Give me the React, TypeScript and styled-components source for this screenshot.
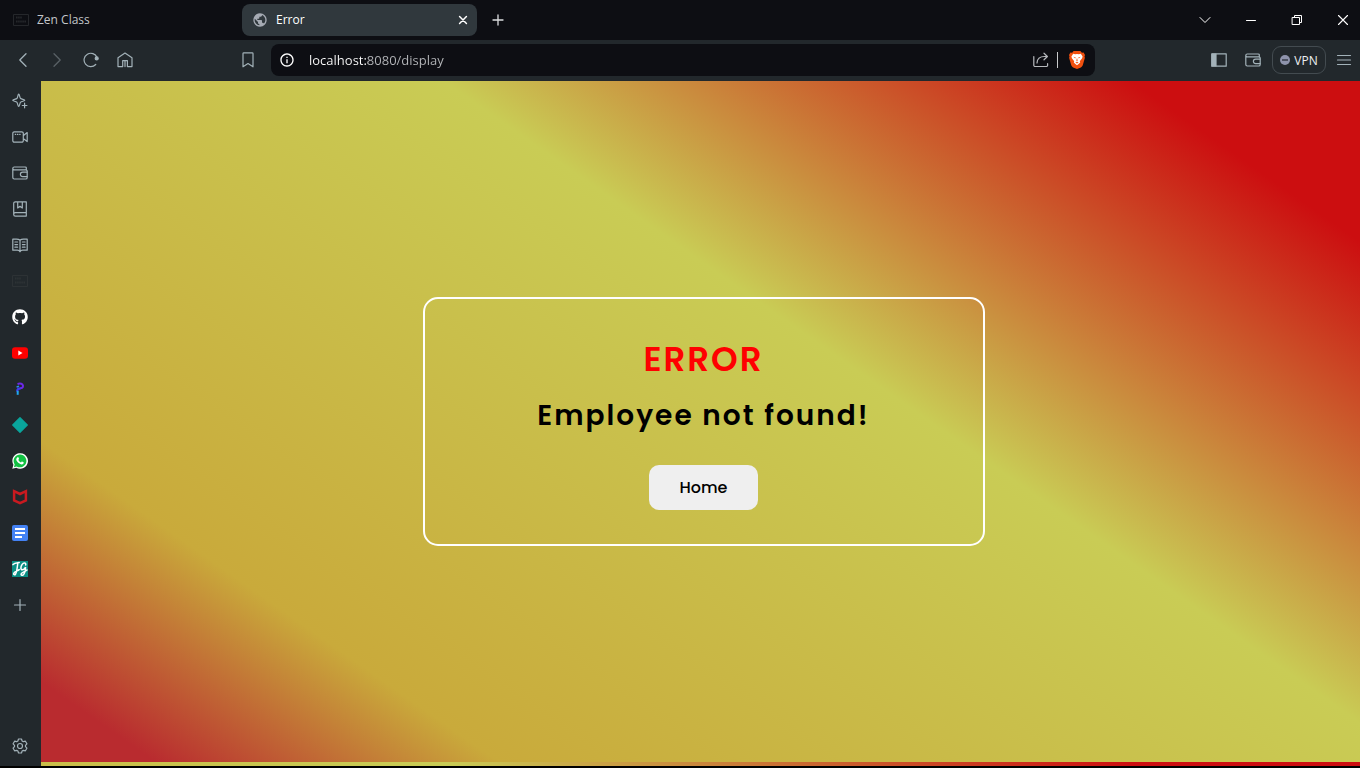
import React from 'react';
import styled, { createGlobalStyle } from 'styled-components';
import { FaGithub } from 'react-icons/fa';
import { MdPublic, MdInfoOutline } from 'react-icons/md';

const GlobalStyle = createGlobalStyle`
  *, *::before, *::after { box-sizing: border-box; }
  body { margin: 0; background: #000; }
  button, input { font: inherit; color: inherit; }
`;

const Browser = styled.div`
  display: flex;
  flex-direction: column;
  min-height: 100vh;
  padding-bottom: 2px;
  font-family: 'Open Sans', 'Noto Sans', sans-serif;
  font-size: 12px;
  color: #e4e7ea;
`;

const TabBar = styled.header`
  display: flex;
  align-items: center;
  height: 40px;
  background: #0d0e13;
`;

const Tab = styled.div<{ $active?: boolean }>`
  display: flex;
  align-items: center;
  gap: 8px;
  flex: 0 1 ${p => (p.$active ? '235px' : '242px')};
  height: 32px;
  padding: 0 4px 0 ${p => (p.$active ? '10px' : '13px')};
  border-radius: 8px;
  background: ${p => (p.$active ? '#30383d' : 'transparent')};
  color: ${p => (p.$active ? '#ffffff' : '#c3c6ca')};
`;

const TabTitle = styled.span`
  flex: 1;
  line-height: 16px;
`;

const IconButton = styled.button<{ $w?: number; $h?: number; $color?: string }>`
  display: flex;
  align-items: center;
  justify-content: center;
  flex: none;
  width: ${p => p.$w ?? 34}px;
  height: ${p => p.$h ?? 32}px;
  padding: 0;
  border: 0;
  background: none;
  color: ${p => p.$color ?? '#a3b2b9'};
`;

const WindowControls = styled.div`
  display: flex;
  margin-left: auto;
  margin-right: -6px;
`;

const Toolbar = styled.nav`
  display: flex;
  align-items: center;
  height: 41px;
  padding-bottom: 1px;
  background: #22282c;
`;

const ToolGroup = styled.div<{ $end?: boolean }>`
  display: flex;
  align-items: center;
  flex: 1;
  justify-content: ${p => (p.$end ? 'flex-end' : 'space-between')};
`;

const NavButtons = styled.div`
  display: flex;
  margin-left: 6px;
`;

const AddressBar = styled.form`
  display: flex;
  align-items: center;
  flex: 0 1 824px;
  height: 32px;
  margin-left: 6px;
  padding: 0 0 0 8px;
  border-radius: 8px;
  background: #0d0e13;
`;

const AddressInput = styled.input`
  flex: 1;
  min-width: 0;
  height: 24px;
  margin-left: 14px;
  padding: 0;
  border: 0;
  outline: 0;
  font-size: 13px;
  background: linear-gradient(90deg, #ffffff 59px, #b5b7ba 59px);
  background-clip: text;
  -webkit-text-fill-color: transparent;
`;

const Divider = styled.span`
  width: 1px;
  height: 16px;
  background: #c8cacc;
`;

const VpnButton = styled.button`
  display: flex;
  align-items: center;
  justify-content: center;
  gap: 4px;
  width: 54px;
  height: 28px;
  margin: 0 1px 0 2px;
  padding: 0;
  border: 1px solid #434b50;
  border-radius: 9px;
  background: none;
  color: #eef0f2;
`;

const Body = styled.div`
  display: flex;
  flex: 1;
`;

const Sidebar = styled.aside`
  display: flex;
  flex-direction: column;
  align-items: center;
  flex: none;
  width: 41px;
  padding: 2px 1px 2px 0;
  background: #22282c;
`;

const SettingsSlot = styled.div`
  margin-top: auto;
`;

const Page = styled.main`
  display: flex;
  align-items: center;
  justify-content: center;
  flex: 1;
  padding: 0 0 4px 6px;
  font-family: Poppins, Inter, sans-serif;
  background-image: linear-gradient(35deg, #b92b2f 5%, #c9aa3b 20%, #c9cc55 60%, #cc0e10 90%);
  background-size: 100% calc(100% - 4px);
`;

const Card = styled.section`
  display: flex;
  flex-direction: column;
  align-items: center;
  width: 562px;
  padding: 35px 34px 34px;
  border: 2px solid #ffffff;
  border-radius: 15px;
  text-align: center;
`;

const Title = styled.h1`
  margin: 0 0 10px;
  font-size: 34px;
  font-weight: 600;
  line-height: 51px;
  letter-spacing: 2px;
  color: #ff0000;
`;

const Message = styled.h2`
  margin: 0 0 28px;
  font-size: 28px;
  font-weight: 600;
  line-height: 42px;
  letter-spacing: 2px;
  color: #000000;
`;

const HomeButton = styled.button`
  height: 45px;
  padding: 0 31px;
  border: 0;
  border-radius: 10px;
  background: #efefef;
  color: #000000;
  font-size: 16px;
  font-weight: 500;
`;

type IconProps = { children: React.ReactNode; size?: number; sw?: number };
const Line = ({ children, size = 16, sw = 1.2 }: IconProps) => (
  <svg width={size} height={size} viewBox="0 0 16 16" fill="none" stroke="currentColor"
    strokeWidth={sw} strokeLinecap="round" strokeLinejoin="round" aria-hidden="true">
    {children}
  </svg>
);

const ZenIcon = ({ color }: { color: string }) => (
  <svg width="16" height="16" viewBox="0 0 16 16" fill="none" stroke={color} aria-hidden="true">
    <path d="M.5 2.5h15v11H.5z" />
    <path d="M3 5.5h6M3 9.5h10" strokeWidth="2" strokeDasharray="1.6 .5" />
  </svg>
);

const Wallet = () => (
  <Line>
    <path d="M14.300 5V3a1 1 0 0 0-1-1H2.200A1.400 1.400 0 0 0 .8 3.400v9.200A1.400 1.400 0 0 0 2.200 14h11.400a1.600 1.600 0 0 0 1.600-1.600V6.200A1.400 1.400 0 0 0 13.800 4.800H2.200A1.400 1.400 0 0 1 .8 3.400" />
    <path d="M15 7.200h-4.400a2.200 2.200 0 0 0 0 4.400H15" />
  </Line>
);

const Sparkle = () => (
  <Line>
    <path d="M6.700 1.200c.9 0 .9 3.400 1.900 4.300s4.200.9 4.200 1.800-3.200.9-4.200 1.900-1 4.200-1.900 4.200-.9-3.200-1.900-4.200S.7 8.200.7 7.300s3.200-.8 4.200-1.800.9-4.300 1.800-4.300z" />
    <path d="M12.600 10.200v4.600M10.300 12.500h4.600" />
  </Line>
);

const Camera = () => (
  <Line>
    <path d="M2.300 2.800h7.500a1.500 1.500 0 0 1 1.500 1.500v7.400a1.500 1.500 0 0 1-1.500 1.500H2.300a1.500 1.500 0 0 1-1.500-1.500V4.300a1.500 1.500 0 0 1 1.500-1.500zM11.500 6.400l3.700-2.800v9l-3.700-2.800" />
    <path d="M3.300 5.400h.4M5.500 5.400h.4M7.700 5.400h.4" />
  </Line>
);

const Album = () => (
  <Line>
    <path d="M14.300 11.700V.8H3.300a1.600 1.600 0 0 0-1.600 1.600v11a1.700 1.700 0 0 0 1.700 1.700h10.900M14.300 11.700H3.300a1.600 1.600 0 0 0-1.600 1.600M14.300 11.700v3.400M5.700 1v6l2.300-1.700L10.300 7V1" />
  </Line>
);

const Book = () => (
  <Line>
    <path d="M8 3.200C7 2.400 6 2.200 4.500 2.200H.8v11h4.500c1.200 0 2 .4 2.700 1.600.7-1.200 1.500-1.600 2.700-1.600h4.500v-11h-3.700C10 2.200 9 2.400 8 3.200zM8 3.200v11" />
    <path d="M2.900 5h2.700M2.900 7.600h2.700M2.900 10.200h2.700M10.400 5h2.700M10.400 7.600h2.700M10.400 10.200h2.700" />
  </Line>
);

const YouTube = () => (
  <svg width="16" height="16" viewBox="0 0 16 16" aria-hidden="true">
    <rect y="2.300" width="16" height="11.500" rx="3" fill="#f00" />
    <path d="M6.300 5.600v4.900L10.500 8z" fill="#fff" />
  </svg>
);

const Ribbon = () => (
  <svg width="16" height="16" viewBox="0 0 16 16" fill="none" aria-hidden="true">
    <path d="M5.500 3c3-1 5.200-.2 5.500 1.600S9.800 7.400 8 7.200" stroke="#6d28e8" strokeWidth="2" />
    <path d="M4.600 6l2.400-.8" stroke="#2a90e8" strokeWidth="1.600" />
    <path d="M8.600 7.400c-2.400 0-3.400.8-3.400 3" stroke="#4338f5" strokeWidth="2.200" />
    <path d="M5.700 9.800v4" stroke="#20a8f0" strokeWidth="2" />
  </svg>
);

const Diamond = () => (
  <svg width="16" height="16" viewBox="0 0 16 16" aria-hidden="true">
    <path d="M8 .8L15.200 8 8 15.200.8 8z" fill="#0aa59c" stroke="#0aa59c" strokeWidth="1.400" strokeLinejoin="round" />
  </svg>
);

const WhatsApp = () => (
  <svg width="16" height="16" viewBox="0 0 16 16" aria-hidden="true">
    <path d="M.3 15.800l1.100-4A7.800 7.800 0 1 1 4.300 14.700z" fill="#fff" />
    <path d="M1.900 14.200l.8-2.700A6.400 6.400 0 1 1 4.700 13.400z" fill="#12c143" />
    <path d="M5.600 4.200c.5-.2.8 0 .9.400l.5 1.200c.1.400-.5.8-.6 1.100.5 1.200 1.400 2 2.600 2.500.4-.1.7-.9 1.100-.8l1.400.7c.5.300.1 1.400-.4 1.700-.9.600-1.800.5-2.800.1-1.800-.7-3-2-3.800-3.500-.6-1.300-.1-2.700 1.100-3.400z" fill="#fff" />
  </svg>
);

const McShield = () => (
  <svg width="16" height="16" viewBox="0 0 16 16" fill="none" aria-hidden="true">
    <path d="M2.100 2.200L8 5l5.900-2.800v9.200L8 14.200l-5.900-2.800z" stroke="#c91a20" strokeWidth="2.500" />
  </svg>
);

const Docs = () => (
  <svg width="16" height="16" viewBox="0 0 16 16" aria-hidden="true">
    <rect width="16" height="16" rx="2" fill="#4482f4" />
    <path d="M3 4h10M3 8h10M3 12h7" stroke="#fff" strokeWidth="2" />
  </svg>
);

const Monogram = () => (
  <svg width="16" height="16" viewBox="0 0 16 16" fill="none" aria-hidden="true">
    <rect width="16" height="16" fill="#0b8f84" />
    <path d="M1 3.600c1.500-1.800 4-1.700 6.200-2M5.800 2C5.300 6 5 10.500 3.600 13c-.9 1.500-2.500.6-1.700-.9.9-1.500 3.300-2.100 5.300-3.500M13.700 4c.4-2.700-2.200-2.800-3.700-.4-1.300 2-1.700 5.200.3 5.200 1.500 0 2.700-1.500 3.300-2.600-.1 3-.7 6-2.400 7.700-1.200 1-2.700 0-1.700-1.500 1-1.400 3.500-1.500 5.500-3.400" stroke="#fff" strokeWidth="1.500" strokeLinecap="round" />
  </svg>
);

const Gear = () => (
  <Line>
    <path d="M6.500 1h3l.6 2 1.200.7 2.100-.5 1.500 2.600L13.500 7.300v1.400l1.400 1.500-1.500 2.600-2.100-.5-1.200.7-.6 2h-3l-.6-2-1.200-.7-2.100.5-1.500-2.600 1.400-1.500V7.300L1.100 5.800l1.500-2.600 2.100.5L5.900 3z" />
    <circle cx="8" cy="8" r="2.500" />
  </Line>
);

const Lion = () => (
  <svg width="16" height="18" viewBox="0 0 16 18" aria-hidden="true">
    <path d="M4.600 0h6.800l1.500 1.700 1.700-.2L16 4l-.5 1.500.4 1.200-2 7c-.4 1.600-1.300 2.100-2.600 3L8 18l-3.300-1.300c-1.300-.9-2.200-1.400-2.600-3L.1 6.700l.4-1.200L0 4l1.400-2.500 1.700.2z" fill="#f0500f" />
    <path d="M4.200 2.800l1.900.4L8 2.900l1.900.3 1.900-.4 1.800 2.700-.5 1.800-2.300 2.900.4 1.400-1.600 1.300L8 14.300l-1.600-1.400-1.600-1.300.4-1.400-2.300-2.900-.5-1.800z" fill="#fff" />
    <path d="M4.300 5.800l2.500.8-.6 1zM11.700 5.800l-2.500.8.6 1zM7.700 7.500h.6l.3 2.500-.6.600-.6-.6zM6.300 11.500l1.700-.5 1.700.5-1.700 1z" fill="#f0500f" />
  </svg>
);

const shortcuts: [string, React.ReactNode][] = [
  ['Leo AI', <Sparkle />],
  ['Talk', <Camera />],
  ['Wallet', <Wallet />],
  ['Bookmarks', <Album />],
  ['Reading list', <Book />],
  ['Zen Class', <ZenIcon color="#2d3235" />],
  ['GitHub', <FaGithub size={16} color="#fff" />],
  ['YouTube', <YouTube />],
  ['Portfolio', <Ribbon />],
  ['Diamond', <Diamond />],
  ['WhatsApp', <WhatsApp />],
  ['McAfee', <McShield />],
  ['Docs', <Docs />],
  ['Monogram', <Monogram />],
  ['Add to sidebar', <Line><path d="M8 2.500v11M2.500 8h11" /></Line>],
];

export default function App() {
  return (
    <Browser>
      <GlobalStyle />
      <TabBar>
        <Tab>
          <ZenIcon color="#25272b" />
          <TabTitle>Zen Class</TabTitle>
        </Tab>
        <Tab $active>
          <MdPublic size={16} color="#a6abb4" />
          <TabTitle>Error</TabTitle>
          <IconButton $w={20} $h={20} $color="#fff" aria-label="Close tab">
            <Line size={10} sw={2.4}><path d="M2.500 2.500l11 11M13.500 2.500l-11 11" /></Line>
          </IconButton>
        </Tab>
        <IconButton $w={42} $color="#dcdee0" aria-label="New tab">
          <Line sw={1.3}><path d="M8 3v10M3 8h10" /></Line>
        </IconButton>
        <WindowControls>
          <IconButton $w={46} $color="#fff" aria-label="Search tabs">
            <Line sw={1}><path d="M3 5.500l5 5 5-5" /></Line>
          </IconButton>
          <IconButton $w={46} $color="#fff" aria-label="Minimize">
            <Line sw={1}><path d="M3.500 8.500h9" /></Line>
          </IconButton>
          <IconButton $w={46} $color="#fff" aria-label="Restore">
            <Line sw={1}><path d="M3.500 5.500h7v7h-7zM5.500 5.500v-2h7v7h-2" /></Line>
          </IconButton>
          <IconButton $w={46} $color="#fff" aria-label="Close window">
            <Line sw={1.1}><path d="M3.500 3.500l9 9M12.500 3.500l-9 9" /></Line>
          </IconButton>
        </WindowControls>
      </TabBar>

      <Toolbar aria-label="Browser toolbar">
        <ToolGroup>
          <NavButtons>
            <IconButton aria-label="Back"><Line sw={1.3}><path d="M11 1.800L4.800 8l6.200 6.200" /></Line></IconButton>
            <IconButton $color="#596166" aria-label="Forward"><Line sw={1.3}><path d="M5 1.800L11.200 8 5 14.200" /></Line></IconButton>
            <IconButton aria-label="Reload">
              <Line><path d="M12.700 12.500A6.700 6.700 0 1 1 14 5.500" /><circle cx="13.700" cy="6.400" r="1.500" fill="currentColor" /></Line>
            </IconButton>
            <IconButton aria-label="Home">
              <Line><path d="M1 14.600V5.700L8 1.100l7 4.600v8.900h-4.600V8.600H5.700v6zM8 9v5.600" /></Line>
            </IconButton>
          </NavButtons>
          <IconButton aria-label="Bookmark this page">
            <Line><path d="M3.800.8h8.400a.8.8 0 0 1 .8.800v13.200L8 11.600l-5 3.200V1.600a.8.8 0 0 1 .8-.8z" /></Line>
          </IconButton>
        </ToolGroup>
        <AddressBar onSubmit={e => e.preventDefault()}>
          <MdInfoOutline size={16} color="#fff" />
          <AddressInput aria-label="Address" defaultValue="localhost:8080/display" />
          <IconButton $w={32} $color="#b6b9bd" aria-label="Share">
            <Line><path d="M.8 4.500v8.700a1.300 1.300 0 0 0 1.300 1.300h11.200a1.300 1.300 0 0 0 1.300-1.300v-1.500M4 11c.2-4.600 2.800-6.500 7.500-6.500h2.700M11 1.200l3.400 3.300L11 7.800" /></Line>
          </IconButton>
          <Divider />
          <IconButton $w={37} aria-label="Shields"><Lion /></IconButton>
        </AddressBar>
        <ToolGroup $end>
          <IconButton aria-label="Sidebar">
            <Line><path d="M.8 1.800h14.400v12.400H.8z" /><path d="M1 2h4v12H1z" fill="currentColor" /></Line>
          </IconButton>
          <IconButton aria-label="Wallet"><Wallet /></IconButton>
          <VpnButton>
            <svg width="10" height="10" viewBox="0 0 10 10" aria-hidden="true">
              <circle cx="5" cy="5" r="5" fill="#8e93ab" /><path d="M2 5h6" stroke="#30353f" strokeWidth="1.400" />
            </svg>
            VPN
          </VpnButton>
          <IconButton $w={33} aria-label="Menu"><Line><path d="M1.500 3.500h13M1.500 8h13M1.500 12.500h13" /></Line></IconButton>
        </ToolGroup>
      </Toolbar>

      <Body>
        <Sidebar>
          {shortcuts.map(([label, icon]) => (
            <IconButton key={label} $h={36} aria-label={label}>{icon}</IconButton>
          ))}
          <SettingsSlot>
            <IconButton $h={36} aria-label="Settings"><Gear /></IconButton>
          </SettingsSlot>
        </Sidebar>
        <Page>
          <Card>
            <Title>ERROR</Title>
            <Message>Employee not found!</Message>
            <HomeButton>Home</HomeButton>
          </Card>
        </Page>
      </Body>
    </Browser>
  );
}
